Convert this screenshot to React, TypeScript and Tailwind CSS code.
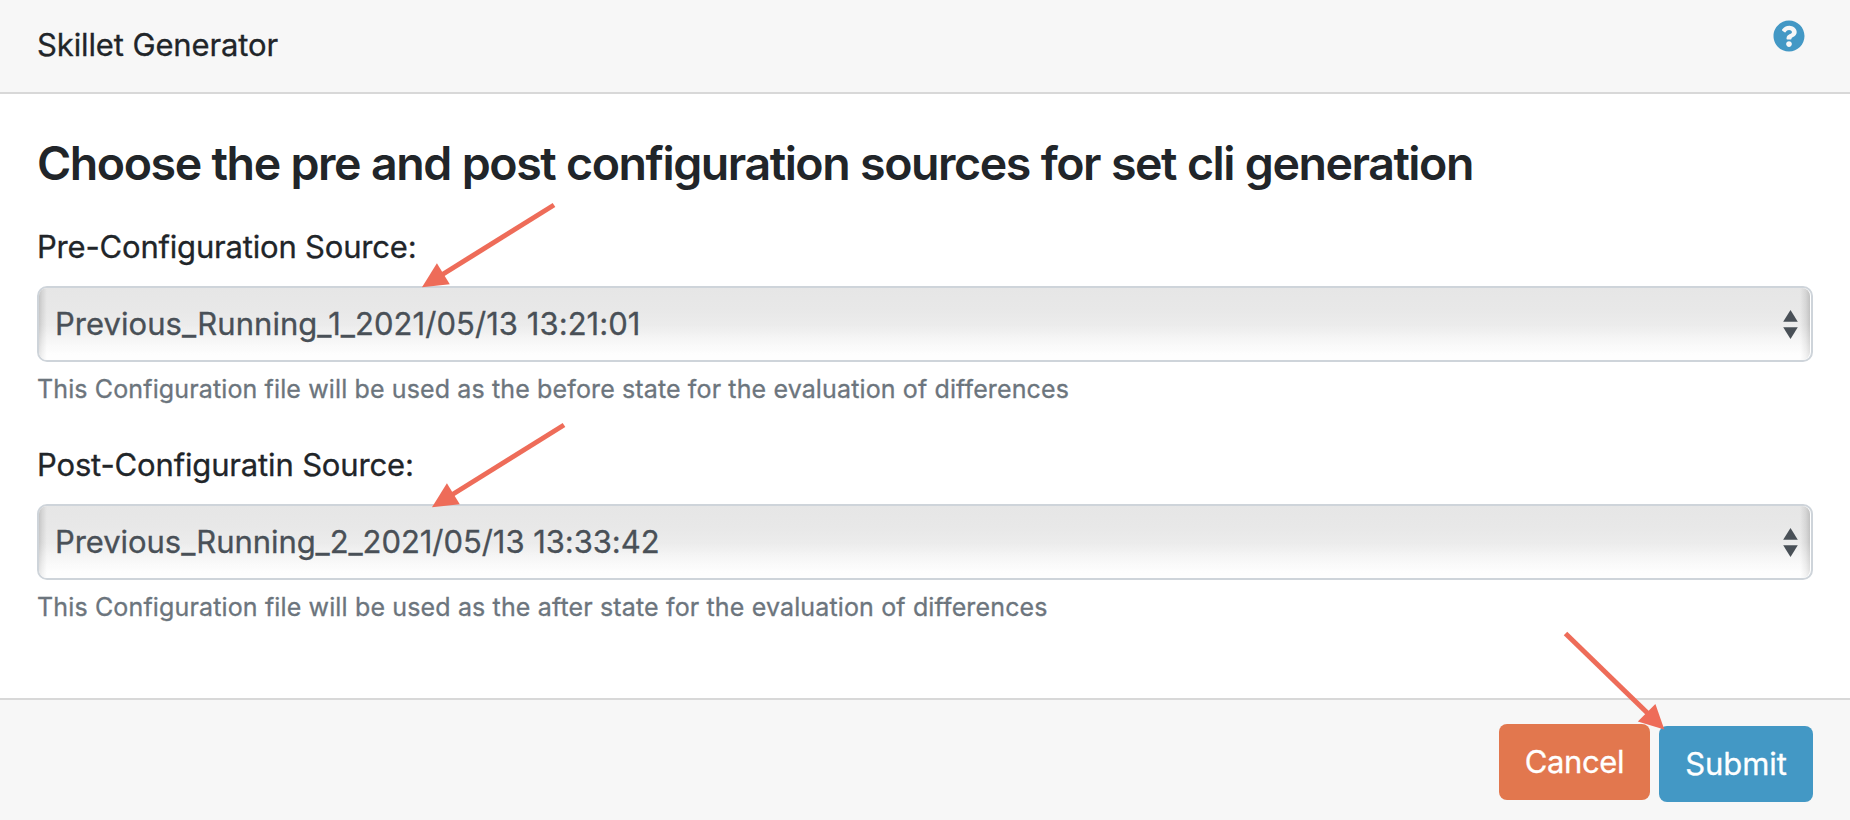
import { FaQuestionCircle } from "react-icons/fa";

type SourceFieldProps = {
  label: string;
  labelClass: string;
  value: string;
  valueClass: string;
  hint: string;
  hintClass: string;
};

function SourceField({ label, labelClass, value, valueClass, hint, hintClass }: SourceFieldProps) {
  return (
    <div className="flex flex-col">
      <label className={`text-[31px] leading-[48px] ${labelClass}`}>{label}</label>
      <div className="mt-[15px] flex h-[76px] rounded-[10px] border-2 border-[#ced4da] bg-white pr-px">
        <div className="flex flex-1 items-center justify-between rounded-[8px] bg-[linear-gradient(to_bottom,rgba(255,255,255,0)_50%,rgba(255,255,255,0.4)_100%),linear-gradient(to_right,rgba(0,0,0,0.15)_0px,rgba(0,0,0,0.08)_3px,rgba(0,0,0,0)_8px),linear-gradient(to_left,rgba(0,0,0,0.17)_0px,rgba(0,0,0,0.08)_4px,rgba(0,0,0,0)_10px),linear-gradient(to_bottom,#e6e6e6_0%,#e8e8e8_30%,#ececec_52%,#f4f4f4_72%,#fefefe_94%)] pr-3 pl-4">
          <span className={`text-[31px] leading-[48px] text-[#495057] ${valueClass}`}>{value}</span>
          <svg width="15" height="29" viewBox="0 0 15 29" fill="#495057">
            <path d="M7.5 0 L14.8 11.7 H0.2 Z" />
            <path d="M0.2 17.3 H14.8 L7.5 29 Z" />
          </svg>
        </div>
      </div>
      <p className={`mt-2 text-[25px] leading-[38px] text-[#6c757d] ${hintClass}`}>{hint}</p>
    </div>
  );
}

export default function App() {
  return (
    <div className="relative flex h-[820px] w-[1850px] flex-col overflow-hidden bg-white font-['Inter',sans-serif] whitespace-nowrap text-[#212529] [-webkit-text-stroke:0.3px_currentColor]">
      <header className="flex h-[94px] items-start justify-between border-b-2 border-[#d8d8d8] bg-[#f7f7f7] pr-[45px] pl-[37px]">
        <span className="mt-[21px] text-[31px] leading-[48px] tracking-[-0.12px]">Skillet Generator</span>
        <FaQuestionCircle className="mt-5 size-8 text-[#4398c5]" />
      </header>

      <main className="flex h-[604px] flex-col px-[37px] pt-10">
        <h3 className="text-[46.5px] leading-[58px] font-semibold tracking-[-1.45px] [-webkit-text-stroke:0px] [word-spacing:0.6px]">
          Choose the pre and post configuration sources for set cli generation
        </h3>
        <div className="mt-[31px] flex flex-col gap-[33px]">
          <SourceField
            label="Pre-Configuration Source:"
            labelClass="tracking-[-0.19px]"
            value="Previous_Running_1_2021/05/13 13:21:01"
            valueClass="tracking-[0.05px]"
            hint="This Configuration file will be used as the before state for the evaluation of differences"
            hintClass="tracking-[0.13px]"
          />
          <SourceField
            label="Post-Configuratin Source:"
            labelClass="tracking-[-0.16px]"
            value="Previous_Running_2_2021/05/13 13:33:42"
            valueClass="tracking-[-0.06px]"
            hint="This Configuration file will be used as the after state for the evaluation of differences"
            hintClass="tracking-[0.145px]"
          />
        </div>
      </main>

      <footer className="flex flex-1 items-start justify-end gap-[9px] border-t-2 border-[#d8d8d8] bg-[#f7f7f7] pt-6 pr-[37px] text-[31px] leading-[48px] text-white">
        <button className="flex h-[76px] w-[151px] items-center justify-center rounded-[8px] bg-[#e2774e] tracking-[-0.4px]">
          Cancel
        </button>
        <button className="mt-0.5 flex h-[76px] w-[154px] items-center justify-center rounded-[8px] bg-[#4398c5] tracking-[-0.1px]">
          Submit
        </button>
      </footer>

      <svg
        className="pointer-events-none absolute inset-0"
        width="1850"
        height="820"
        viewBox="0 0 1850 820"
        fill="#ee6c59"
        stroke="#ee6c59"
      >
        <path d="M554 205 L440 276" strokeWidth="5" />
        <path d="M422 287.3 L436.9 263.3 L449.8 284.3 Z" stroke="none" />
        <path d="M564 425 L450 496" strokeWidth="5" />
        <path d="M432 507.3 L446.9 483.3 L459.8 504.3 Z" stroke="none" />
        <path d="M1565.5 633.5 L1650 715.5" strokeWidth="5" />
        <path d="M1664.3 729.5 L1655.4 704 L1637.8 721.6 Z" stroke="none" />
      </svg>
    </div>
  );
}
